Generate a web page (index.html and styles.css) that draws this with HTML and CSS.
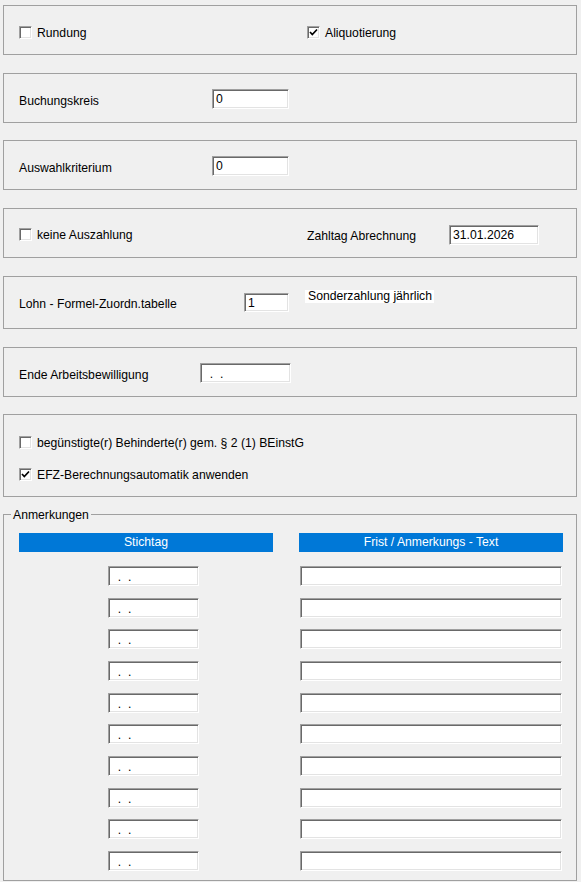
FILE: index.html
```html
<!DOCTYPE html>
<html>
<head>
<meta charset="utf-8">
<link rel="stylesheet" href="styles.css">
</head>
<body>
<div class="page">
  <div class="panel p1">
    <div class="col1 chk-row"><span class="cb"></span><span class="lbl">Rundung</span></div>
    <div class="chk-row"><span class="cb checked"><svg viewBox="0 0 11 11" width="11" height="11"><polyline points="2,5 4.3,7.5 9,2.5" fill="none" stroke="#000" stroke-width="1.7"/></svg></span><span class="lbl">Aliquotierung</span></div>
  </div>

  <div class="panel p2">
    <span class="lbl w193">Buchungskreis</span>
    <div class="field w77">0</div>
  </div>

  <div class="panel p2 tight">
    <span class="lbl w193">Auswahlkriterium</span>
    <div class="field w77">0</div>
  </div>

  <div class="panel p4">
    <div class="col1 chk-row"><span class="cb"></span><span class="lbl">keine Auszahlung</span></div>
    <span class="lbl w142">Zahltag Abrechnung</span>
    <div class="field w90">31.01.2026</div>
  </div>

  <div class="panel p5">
    <span class="lbl w225">Lohn - Formel-Zuordn.tabelle</span>
    <div class="field w45">1</div>
    <span class="lbl sonder">Sonderzahlung jährlich</span>
  </div>

  <div class="panel p2">
    <span class="lbl w181">Ende Arbeitsbewilligung</span>
    <div class="field w91 date">  .  .</div>
  </div>

  <div class="panel p7 tight">
    <div class="chk-row"><span class="cb"></span><span class="lbl">begünstigte(r) Behinderte(r) gem. § 2 (1) BEinstG</span></div>
    <div class="chk-row"><span class="cb checked"><svg viewBox="0 0 11 11" width="11" height="11"><polyline points="2,5 4.3,7.5 9,2.5" fill="none" stroke="#000" stroke-width="1.7"/></svg></span><span class="lbl">EFZ-Berechnungsautomatik anwenden</span></div>
  </div>

  <div class="group tight">
    <span class="legend">Anmerkungen</span>
    <div class="grid">
      <div class="head h-left">Stichtag</div>
      <div class="head h-right">Frist / Anmerkungs - Text</div>
      <div class="colL">
        <div class="field w91 date">  .  .</div>
        <div class="field w91 date">  .  .</div>
        <div class="field w91 date">  .  .</div>
        <div class="field w91 date">  .  .</div>
        <div class="field w91 date">  .  .</div>
        <div class="field w91 date">  .  .</div>
        <div class="field w91 date">  .  .</div>
        <div class="field w91 date">  .  .</div>
        <div class="field w91 date">  .  .</div>
        <div class="field w91 date">  .  .</div>
      </div>
      <div class="colR">
        <div class="field w262"></div>
        <div class="field w262"></div>
        <div class="field w262"></div>
        <div class="field w262"></div>
        <div class="field w262"></div>
        <div class="field w262"></div>
        <div class="field w262"></div>
        <div class="field w262"></div>
        <div class="field w262"></div>
        <div class="field w262"></div>
      </div>
    </div>
  </div>
</div>
</body>
</html>
```
FILE: styles.css
```css
html, body {
  margin: 0;
  padding: 0;
  background: #f0f0f0;
}
body {
  width: 581px;
  height: 882px;
  overflow: hidden;
  font-family: "Liberation Sans", Arial, sans-serif;
  font-size: 12.2px;
  color: #000;
}
.page {
  padding: 5px 4px 0 3px;
  display: flex;
  flex-direction: column;
  gap: 18px;
}
.panel {
  box-sizing: border-box;
  border: 1px solid #a0a0a0;
  height: 50px;
  display: flex;
  align-items: center;
  padding-left: 15px;
}
.tight { margin-top: -1px; }
.p1 { padding-top: 5px; }
.p2 { padding-top: 2px; }
.p4 { padding-top: 3px; }
.p5 { height: 53px; padding-top: 0; }
.p7 {
  height: 83px;
  flex-direction: column;
  align-items: flex-start;
  justify-content: flex-start;
  padding-top: 20px;
  gap: 18px;
}
.lbl {
  line-height: 14px;
  white-space: nowrap;
  padding-top: 3px;
}
.chk-row {
  display: flex;
  align-items: center;
  gap: 5px;
  height: 14px;
}
.chk-row .lbl { padding-top: 1px; }
.col1 { width: 288px; }
.cb {
  box-sizing: border-box;
  width: 13px;
  height: 13px;
  background: #fff;
  border: 1px solid;
  border-color: #a0a0a0 #fff #fff #a0a0a0;
  box-shadow: inset 1px 1px 0 #696969, inset -1px -1px 0 #e3e3e3;
  display: flex;
  align-items: center;
  justify-content: center;
  flex: none;
}
.cb svg { display: block; }
.w193 { width: 193px; }
.w142 { width: 142px; }
.w225 { width: 225px; }
.w181 { width: 181px; }
.field {
  box-sizing: border-box;
  height: 20px;
  background: #fff;
  border: 1px solid;
  border-color: #a0a0a0 #fff #fff #a0a0a0;
  box-shadow: inset 1px 1px 0 #696969, inset -1px -1px 0 #e3e3e3;
  padding: 2px 0 0 3px;
  line-height: 15px;
  white-space: pre;
  flex: none;
}
.w77 { width: 77px; }
.w90 { width: 90px; }
.w91 { width: 91px; }
.w45 { width: 45px; height: 19px; }
.w262 { width: 262px; }
.date { line-height: 17px; padding-left: 2px; }
.sonder {
  margin-left: 16px;
  background: #fff;
  padding: 0 2px 0 3px;
  line-height: 13px;
  margin-bottom: 12px;
}
.group {
  position: relative;
  box-sizing: border-box;
  border: 1px solid #a0a0a0;
  height: 367px;
  padding: 18px 0 0 15px;
}
.legend {
  position: absolute;
  left: 7px;
  top: -6px;
  background: #f0f0f0;
  padding: 0 2px;
  line-height: 12px;
}
.grid {
  display: grid;
  grid-template-columns: 254px 264px;
  column-gap: 26px;
  row-gap: 14px;
}
.head {
  height: 19px;
  background: #0078d7;
  color: #fff;
  text-align: center;
  line-height: 19px;
}
.colL, .colR {
  display: flex;
  flex-direction: column;
  gap: 11.67px;
}
.colL { padding-left: 89px; }
.colR { padding-left: 1px; }
```
